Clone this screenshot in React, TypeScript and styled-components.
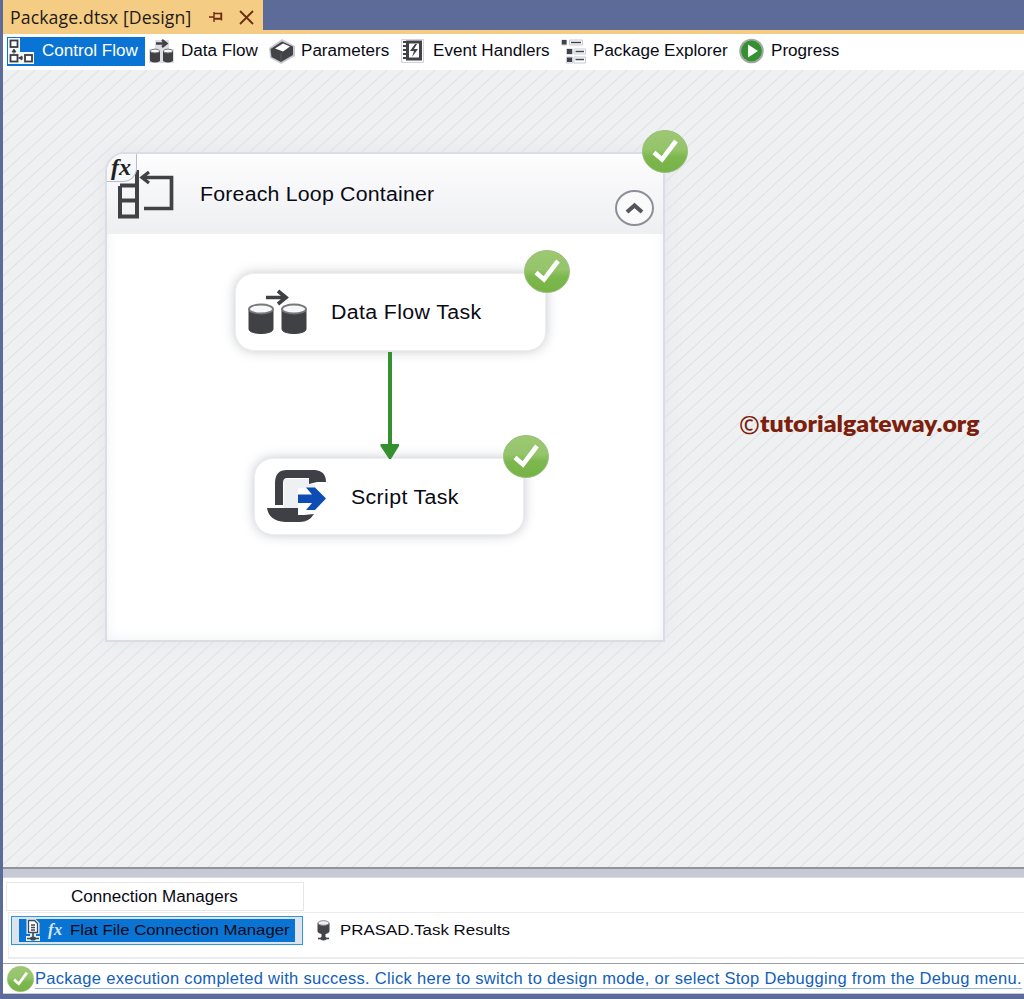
import React from "react";
import styled, { createGlobalStyle } from "styled-components";

const Global = createGlobalStyle`
  * { box-sizing: border-box; }
  body { margin: 0; background: #5d6b99; font-family: "Liberation Sans", Arial, sans-serif; color: #0a0a14; }
  svg { display: block; flex: none; overflow: visible; }
`;

const Window = styled.div`
  width: 1024px;
  height: 999px;
  overflow: hidden;
  display: flex;
  flex-direction: column;
  padding: 0 0 5px 3px;
  background: #5d6b99;
`;

const Label = styled.span<{ $size?: number; $track?: number; $stretch?: number }>`
  display: inline-block;
  font-size: ${(p) => p.$size ?? 16}px;
  letter-spacing: ${(p) => p.$track ?? 0}px;
  line-height: 24px;
  white-space: nowrap;
  transform: scaleX(${(p) => p.$stretch ?? 1.066});
  transform-origin: left center;
`;

const TabStrip = styled.div`
  height: 34px;
  flex: none;
  display: flex;
  border-bottom: 4px solid #f5cc84;
`;

const DocumentTab = styled.div`
  width: 260px;
  display: flex;
  align-items: center;
  background: #f5cc84;
  padding: 4px 0 0 7px;
  font-family: "Open Sans", "Noto Sans", sans-serif;
  color: #1e1b18;
`;

const PinIcon = styled.svg`margin-left: 19px;`;
const CloseIcon = styled.svg`margin-left: 16px;`;

const Toolbar = styled.nav`
  height: 36px;
  flex: none;
  display: flex;
  align-items: flex-start;
  background: #fff;
  padding: 3px 0 0 4px;
`;

const ToolTab = styled.div<{ $width: number; $gap: number; $active?: boolean }>`
  width: ${(p) => p.$width}px;
  height: 29px;
  display: flex;
  align-items: center;
  gap: ${(p) => p.$gap}px;
  padding-left: 1px;
  padding-bottom: 1px;
  background: ${(p) => (p.$active ? "#0a74d4" : "transparent")};
  color: ${(p) => (p.$active ? "#fff" : "#0a0a14")};
`;

const Canvas = styled.main`
  position: relative;
  height: 797px;
  flex: none;
  background: repeating-linear-gradient(137.4deg, #dedfe2 0, #eff0f2 0.9px, #eff0f2 9.93px, #dedfe2 10.83px);
`;

const LoopContainer = styled.section`
  position: absolute;
  left: 102px;
  top: 82px;
  width: 560px;
  height: 490px;
  border: 2px solid #d8dde6;
  border-radius: 20px 0 0 0;
  background: #fff;
  box-shadow: 0 0 20px rgba(228, 231, 236, 1), inset 0 0 14px #eef1f4;
`;

const LoopHeader = styled.header`
  height: 80px;
  display: flex;
  align-items: center;
  border-radius: 18px 0 0 0;
  background: linear-gradient(#fdfdfe, #eeeff1);
`;

const LoopTitle = styled.div`
  width: 438px;
  padding-left: 23px;
`;

const Collapse = styled.svg`margin-top: 28px;`;

const FxCorner = styled.div`
  position: absolute;
  left: 0;
  top: 0;
  width: 30px;
  height: 28px;
  background: #f7f8fa;
  border-right: 1px solid #b9bdca;
  border-bottom: 1px solid #b9bdca;
  border-radius: 18px 0 14px 0;
  font: italic bold 24px/27px "Liberation Serif", serif;
  color: #222;
  padding-left: 4px;
`;

const Task = styled.div<{ $x: number; $y: number; $w: number; $h: number; $gap: number }>`
  position: absolute;
  left: ${(p) => p.$x}px;
  top: ${(p) => p.$y}px;
  width: ${(p) => p.$w}px;
  height: ${(p) => p.$h}px;
  display: flex;
  align-items: center;
  gap: ${(p) => p.$gap}px;
  padding-left: 12px;
  border: 1px solid #eceef0;
  border-radius: 19px;
  background: #fff;
  box-shadow: 0 0 12px rgba(120, 125, 135, 0.42);
`;

const Badge = styled.div<{ $x: number; $y: number }>`
  position: absolute;
  left: ${(p) => p.$x}px;
  top: ${(p) => p.$y}px;
`;

const Arrow = styled.svg`
  position: absolute;
  left: 377px;
  top: 282px;
`;

const Watermark = styled.div`
  position: absolute;
  left: 736px;
  top: 340px;
  display: flex;
  align-items: center;
  color: #7c200b;
  font-family: Lato, sans-serif;
  font-weight: 800;
`;

const CopyrightMark = styled.span`
  width: 21px;
  font: 600 25px/24px "Open Sans", sans-serif;
  padding-top: 2px;
`;

const Splitter = styled.div`
  height: 11px;
  flex: none;
  border-top: 2px solid #929298;
  background: #c6cad5;
  border-bottom: 1px solid #d8dbe3;
`;

const Connections = styled.section`
  height: 85px;
  flex: none;
  display: flex;
  flex-direction: column;
  background: #fff;
  padding: 4px 0 0 3px;
`;

const ConnectionsTab = styled.div`
  width: 298px;
  height: 29px;
  flex: none;
  display: flex;
  align-items: center;
  padding-left: 64px;
  border: 1px solid #e6e6e8;
`;

const ConnectionList = styled.div`
  height: 47px;
  margin: 1px 0 0 2px;
  display: flex;
  align-items: flex-start;
  border: solid #ececee;
  border-width: 1px 0 2px 1px;
  padding: 3px 0 0 2px;
`;

const SelectedFrame = styled.div`
  width: 292px;
  height: 29px;
  border: 1px solid #2a96e4;
  padding: 2px 7px;
  background: #dde4ec;
`;

const SelectedItem = styled.div`
  height: 23px;
  display: flex;
  align-items: center;
  padding-left: 6px;
  padding-bottom: 1px;
  background: #0a74d4;
`;

const FxMark = styled.span`
  width: 22px;
  margin-left: 7px;
  font: italic bold 17px/20px "Liberation Serif", serif;
  color: #d5e5f2;
`;

const ConnectionItem = styled.div`
  height: 28px;
  display: flex;
  align-items: center;
  gap: 9px;
  margin-left: 13px;
`;

const StatusBar = styled.footer`
  height: 31px;
  flex: none;
  display: flex;
  align-items: center;
  background: #fff;
  border-top: 1px solid #9c9daa;
  border-bottom: 1px solid #c9cbd8;
  padding-left: 4px;
`;

const StatusLink = styled.a`
  margin-left: 1px;
  color: #1160bd;
  font-size: 16.5px;
  line-height: 20px;
  letter-spacing: 0.296px;
  white-space: nowrap;
  border-bottom: 1px solid #8fb5e0;
`;

const Check = ({ w = 46, h = 43 }: { w?: number; h?: number }) => (
  <svg width={w} height={h} viewBox="0 0 46 43" preserveAspectRatio="none">
    <defs>
      <linearGradient id="leaf" x1="0" y1="0" x2="0" y2="1">
        <stop offset="0" stopColor="#9cc872" />
        <stop offset="0.45" stopColor="#95c46b" />
        <stop offset="0.62" stopColor="#7db84f" />
        <stop offset="1" stopColor="#76b244" />
      </linearGradient>
    </defs>
    <ellipse cx="23" cy="21.5" rx="22.5" ry="21" fill="url(#leaf)" stroke="#9bbf80" />
    <path d="M12 22.500L20 29.500L34 11" fill="none" stroke="#fff" strokeWidth="4.600" />
  </svg>
);

const FlowIcon = () => (
  <svg width="26" height="26" viewBox="0 0 26 26">
    <path d="M0 0h12v14h14v12H0z" fill="#f4f7fa" />
    <g stroke="#3c3c42" strokeWidth="1.800" fill="#fff">
      <rect x="2.500" y="2.500" width="7" height="6.500" /><rect x="2.500" y="17" width="7" height="6.500" /><rect x="17" y="17" width="7" height="6.500" />
    </g>
    <path d="M6 16v-4M4 14l2-3 2 3zM10 20h5M14 18l-3 2 3 2z" stroke="#3c3c42" strokeWidth=".8" fill="#3c3c42" />
  </svg>
);

const CylindersIcon = () => (
  <svg width="60" height="46" viewBox="0 0 60 46">
    <g fill="#404145" stroke="#404145">
      <path d="M1 20v20c0 6 24 6 24 0V20zM34 20v20c0 6 24 6 24 0V20z" />
      <ellipse cx="13" cy="20" rx="12" ry="4.500" fill="#f7f7f8" stroke="#77787c" strokeWidth="1.800" />
      <ellipse cx="46" cy="20" rx="12" ry="4.500" fill="#f7f7f8" stroke="#77787c" strokeWidth="1.800" />
      <path d="M18 8.500H38M30 2l8 6.500-8 6.500" fill="none" strokeWidth="3.700" />
    </g>
  </svg>
);

const SmallCylindersIcon = () => (
  <svg width="25" height="25" viewBox="0 0 25 25">
    <path d="M6 1h14v9h5v14H0V10h6z" fill="#dddee3" />
    <g fill="#404145">
      <path d="M1 12v10q5 3 10 0V12zM14 12v10q5 3 10 0V12z" />
      <ellipse cx="6" cy="12" rx="4.600" ry="1.900" fill="#f7f7f8" stroke="#77787c" />
      <ellipse cx="19" cy="12" rx="4.600" ry="1.900" fill="#f7f7f8" stroke="#77787c" />
      <path d="M7 4.500h10M13 1l4.500 3.500L13 8" fill="none" stroke="#404145" strokeWidth="2.400" />
    </g>
  </svg>
);

const CubeIcon = () => (
  <svg width="26" height="25" viewBox="0 0 26 25">
    <path d="M0 9L13 0l13 7v10l-14 8L1 19z" fill="#c9cacf" />
    <path d="M1.500 10L13 2.500l11 5v8.500l-12 7L2.500 18z" fill="#424348" />
    <path d="M6 9.500l8-5 7 3-7 5z" fill="#fff" />
    <path d="M12 14.500v8" stroke="#66676c" strokeWidth=".7" />
  </svg>
);

const EventIcon = () => (
  <svg width="23" height="24" viewBox="0 0 23 24">
    <path d="M.5.500h22v23H.500z" fill="#fafafa" stroke="#d1d2da" />
    <path d="M5 1.500h16v20H5z" fill="#424348" />
    <path d="M8 4.500h10v14H8z" fill="#fff" />
    <path d="M14 5l-5 7h4l-2 6 6-8h-4l3-5z" fill="#424348" />
    <path d="M2 3h5M2 7h5M2 11h5M2 15h5M2 19h5" stroke="#424348" strokeWidth="1.800" />
  </svg>
);

const TreeIcon = () => (
  <svg width="25" height="25" viewBox="0 0 25 25">
    <g fill="#fff" stroke="#c6cbd8">
      <path d="M.5 1h5v5h-5zM8.500 1h13v5h-13zM5.500 10h6v5h-6zM13 10h11.500v5H13zM5.500 18h6v6h-6zM13 18h11.500v6H13z" />
    </g>
    <path d="M1 1h4.500v4.500H1zM6 10h5v5H6zM6 18.500h5V23H6z" fill="#424348" />
    <path d="M10 3.500h10M14.500 12.500h8.500M14.500 20.500h8.500" stroke="#424348" strokeWidth="1.500" />
  </svg>
);

const PlayIcon = () => (
  <svg width="25" height="26" viewBox="0 0 25 26">
    <circle cx="12.500" cy="13" r="12.300" fill="#a2a8a5" />
    <circle cx="12.500" cy="13" r="10.400" fill="#35902f" />
    <path d="M9 6.500L19 13 9 19.500z" fill="#fff" />
  </svg>
);

const LoopIcon = () => (
  <svg width="70" height="60" viewBox="0 0 70 60">
    <path d="M13 22V52.500H30V6M13 21.500H30M13 36.500H30" fill="none" stroke="#414246" strokeWidth="4" />
    <path d="M36 13.500H64.500V44.500H37" fill="none" stroke="#414246" strokeWidth="3.700" />
    <path d="M42 8l-7 5.500 7 5.500" fill="none" stroke="#414246" strokeWidth="3.300" />
  </svg>
);

const ScriptIcon = () => (
  <svg width="60" height="54" viewBox="0 0 60 54">
    <path d="M17 9h26v5h5v4H31v23H17z" fill="#eef0f3" />
    <path d="M8 35V13Q8 0 20 0H48Q59 1 59 12H50L42 14V8H20Q16 8 16 13V35z" fill="#3f4045" />
    <path d="M0 38H31V45H37L47 44Q42 52 33 52H18Q2 51 0 38z" fill="#3f4045" />
    <path d="M31 24.500H45L39 17.500H48L59 28.500L48 40H39L45 33H31z" fill="#0c4cb4" />
  </svg>
);

const FileServerIcon = () => (
  <svg width="16" height="23" viewBox="0 0 16 23">
    <path d="M1.500 0h9l4 4v11H11v2h4v5H1v-5h4v-2H1.500z" fill="#e8f0f6" />
    <path d="M3.500 1.500h6l3 3v9h-9zM6 6h4M6 8.500h4M6 11h4" fill="#fff" stroke="#3e4a56" strokeWidth="1.300" />
    <path d="M8 14v5M2 19.500h12" stroke="#3e4a56" strokeWidth="1.600" />
    <ellipse cx="8" cy="19.500" rx="3" ry="2" fill="#3e4a56" />
  </svg>
);

const DatabaseIcon = () => (
  <svg width="15" height="21" viewBox="0 0 15 21">
    <path d="M1.500 3v8q0 2 4 3V17h4v-3q4-1 4-3V3z" fill="#434449" />
    <ellipse cx="7.500" cy="3" rx="5.500" ry="2.300" fill="#eee" stroke="#85868b" />
    <path d="M2 18.500h11" stroke="#434449" strokeWidth="1.600" />
    <ellipse cx="7.500" cy="18.500" rx="3" ry="1.900" fill="#434449" />
  </svg>
);

export default function App() {
  return (
    <Window>
      <Global />
      <TabStrip>
        <DocumentTab>
          <Label $size={17.5} $track={0.1} $stretch={1.01}>Package.dtsx [Design]</Label>
          <PinIcon width="14" height="12" viewBox="0 0 14 12" fill="none" stroke="#6b2d12" strokeWidth="1.400">
            <path d="M0 6h5M5 1v10M5 2.500h7V8H5M5 7.500h7M12.500 1.500v8" />
          </PinIcon>
          <CloseIcon width="15" height="13" viewBox="0 0 15 13" stroke="#6b2d12" strokeWidth="1.800">
            <path d="M1 0l13 13M14 0L1 13" />
          </CloseIcon>
        </DocumentTab>
      </TabStrip>
      <Toolbar>
        <ToolTab $width={138} $gap={8} $active><FlowIcon /><Label>Control Flow</Label></ToolTab>
        <ToolTab $width={3} $gap={0} />
        <ToolTab $width={120} $gap={7}><SmallCylindersIcon /><Label>Data Flow</Label></ToolTab>
        <ToolTab $width={132} $gap={6}><CubeIcon /><Label>Parameters</Label></ToolTab>
        <ToolTab $width={160} $gap={9}><EventIcon /><Label>Event Handlers</Label></ToolTab>
        <ToolTab $width={178} $gap={7}><TreeIcon /><Label>Package Explorer</Label></ToolTab>
        <ToolTab $width={120} $gap={7}><PlayIcon /><Label>Progress</Label></ToolTab>
      </Toolbar>
      <Canvas>
        <LoopContainer>
          <LoopHeader>
            <LoopIcon />
            <LoopTitle><Label $size={20} $track={0.19}>Foreach Loop Container</Label></LoopTitle>
            <Collapse width="39" height="36" viewBox="0 0 39 36" fill="none">
              <ellipse cx="19.500" cy="18" rx="18.500" ry="17" fill="#fafafb" stroke="#8d8e98" strokeWidth="2" />
              <path d="M12 22l7.500-6.500L27 22" stroke="#55565b" strokeWidth="4" />
            </Collapse>
          </LoopHeader>
          <FxCorner>fx</FxCorner>
        </LoopContainer>
        <Task $x={232} $y={203} $w={311} $h={78} $gap={23}>
          <CylindersIcon />
          <Label $size={20} $track={0.34}>Data Flow Task</Label>
        </Task>
        <Task $x={251} $y={388} $w={270} $h={77} $gap={24}>
          <ScriptIcon />
          <Label $size={20} $track={0.34}>Script Task</Label>
        </Task>
        <Arrow width="20" height="108" viewBox="0 0 20 108" fill="#35902f">
          <path d="M8 0h4v92h7v2L11 107H9L.5 94v-2H8z" />
        </Arrow>
        <Badge $x={639} $y={60}><Check /></Badge>
        <Badge $x={521} $y={180}><Check /></Badge>
        <Badge $x={500} $y={365}><Check /></Badge>
        <Watermark>
          <CopyrightMark>©</CopyrightMark>
          <Label $size={23} $stretch={1.08}>tutorialgateway.org</Label>
        </Watermark>
      </Canvas>
      <Splitter />
      <Connections>
        <ConnectionsTab><Label>Connection Managers</Label></ConnectionsTab>
        <ConnectionList>
          <SelectedFrame>
            <SelectedItem>
              <FileServerIcon /><FxMark>fx</FxMark><Label $size={15.5} $stretch={1.08}>Flat File Connection Manager</Label>
            </SelectedItem>
          </SelectedFrame>
          <ConnectionItem><DatabaseIcon /><Label $size={15.5} $stretch={1.09}>PRASAD.Task Results</Label></ConnectionItem>
        </ConnectionList>
      </Connections>
      <StatusBar>
        <Check w={27} h={26} />
        <StatusLink>Package execution completed with success. Click here to switch to design mode, or select Stop Debugging from the Debug menu.</StatusLink>
      </StatusBar>
    </Window>
  );
}
